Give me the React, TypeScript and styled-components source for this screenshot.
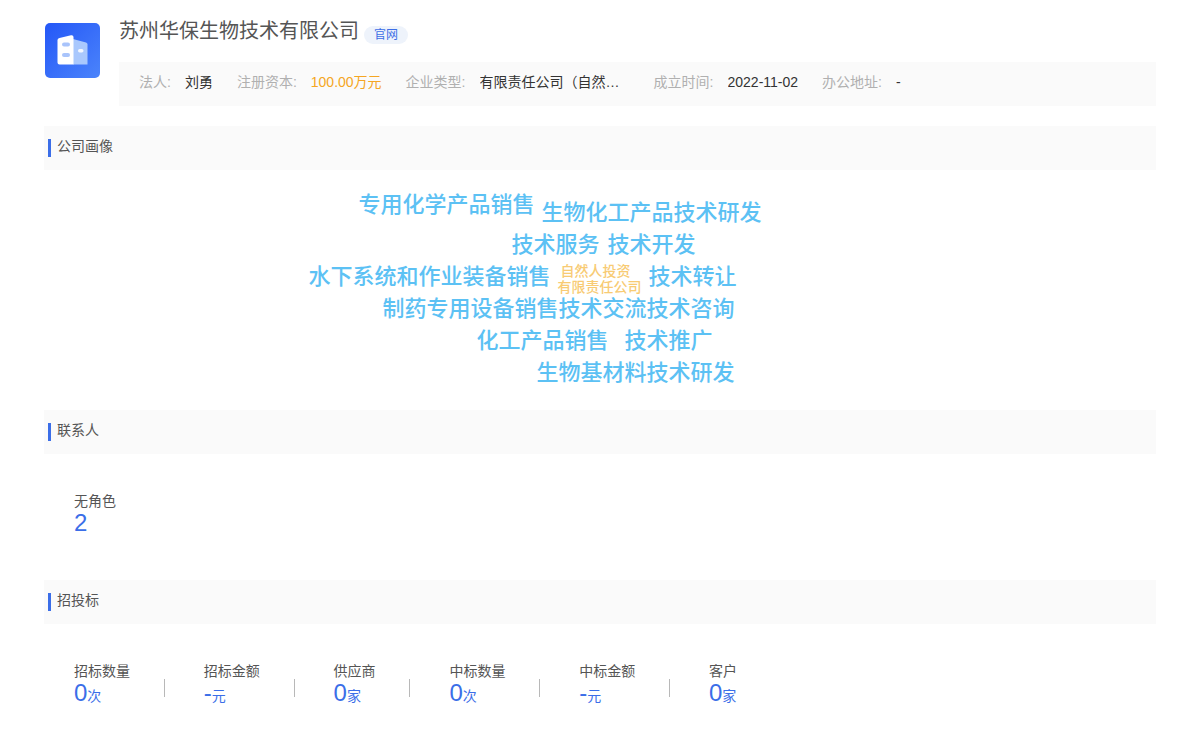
import * as React from "react";
import styled, { createGlobalStyle } from "styled-components";

const GlobalStyle = createGlobalStyle`
  html, body {
    margin: 0;
    padding: 0;
    background: #fff;
  }
  body {
    font-family: "Liberation Sans", "Noto Sans CJK SC", sans-serif;
    color: #333;
  }
`;

const Page = styled.div`
  width: 1200px;
  height: 752px;
  box-sizing: border-box;
  padding: 18px 44px 0;
  overflow: hidden;
`;

// ----------------------------------------------------------------------
// Company header
// ----------------------------------------------------------------------

const CompanyHeader = styled.header`
  display: flex;
  align-items: flex-start;
  margin-bottom: 20px;
`;

const LogoBox = styled.div`
  width: 55px;
  height: 55px;
  margin: 5px 19px 0 1px;
  flex: none;
`;

const CompanyMain = styled.div`
  flex: 1;
  min-width: 0;
`;

const TitleRow = styled.div`
  display: flex;
  align-items: center;
  height: 26px;
  margin-bottom: 18px;
`;

const CompanyName = styled.h1`
  margin: 0;
  font-size: 20px;
  line-height: 26px;
  font-weight: 400;
  color: #555;
`;

const SiteTag = styled.span`
  margin: 7px 0 0 5px;
  width: 44px;
  height: 18px;
  border-radius: 9px;
  background: #eef3fb;
  color: #3d6ee6;
  font-size: 12px;
  line-height: 18px;
  text-align: center;
`;

const InfoBar = styled.div`
  display: flex;
  align-items: flex-start;
  height: 44px;
  box-sizing: border-box;
  padding: 10px 0 0 20px;
  background: #fafafa;
  font-size: 14px;
  line-height: 20px;
`;

const InfoItem = styled.div<{ $width?: number }>`
  display: flex;
  height: 20px;
  margin-right: 24px;
  white-space: nowrap;
  width: ${({ $width }) => ($width ? `${$width}px` : "auto")};
`;

const InfoLabel = styled.span`
  flex: none;
  color: #b0b0b0;
  margin-right: 14px;
`;

const InfoValue = styled.span<{ $accent?: boolean }>`
  display: block;
  height: 20px;
  color: ${({ $accent }) => ($accent ? "#f5a623" : "#333")};
  overflow: hidden;
  text-overflow: ellipsis;
`;

// ----------------------------------------------------------------------
// Sections
// ----------------------------------------------------------------------

const SectionBar = styled.div`
  display: flex;
  align-items: flex-start;
  height: 44px;
  box-sizing: border-box;
  padding: 13px 0 0 4px;
  background: #fafafa;
`;

const SectionTitle = styled.h2`
  margin: 0;
  padding-left: 6px;
  border-left: 3px solid #3b6ee8;
  height: 18px;
  font-size: 14px;
  line-height: 14px;
  font-weight: 400;
  color: #555;
`;

// the cloud is a free canvas, every word has its own spot
const Cloud = styled.div`
  position: relative;
  height: 240px;
`;

const CloudWord = styled.span<{ $x: number; $y: number; $small?: boolean }>`
  position: absolute;
  left: ${({ $x }) => $x - 44.5}px;
  top: ${({ $y }) => $y - 170 - 15}px;
  line-height: 30px;
  white-space: nowrap;
  font-weight: 500;
  font-size: ${({ $small }) => ($small ? "14px" : "22px")};
  color: ${({ $small }) => ($small ? "#f8cb74" : "#5cc1f4")};
`;

const ContactBody = styled.div`
  height: 126px;
  box-sizing: border-box;
  padding: 40px 0 0 30px;
`;

const TenderBody = styled.div`
  display: flex;
  padding: 40px 0 0 30px;
`;

const Stat = styled.div<{ $divider?: boolean }>`
  padding-right: 33.8px;
  margin-right: 39px;
  border-right: ${({ $divider }) => ($divider ? "1px solid #b8b8b8" : "none")};
  height: 18px;
  margin-top: 15px;
`;

const StatInner = styled.div`
  margin-top: -15px;
`;

const StatLabel = styled.div`
  font-size: 14px;
  line-height: 14px;
  color: #555;
  white-space: nowrap;
`;

const StatValue = styled.div`
  margin-top: 1px;
  font-size: 24px;
  line-height: 28px;
  color: #3b6ee8;
  white-space: nowrap;
`;

const StatUnit = styled.span`
  font-size: 14px;
`;

// ----------------------------------------------------------------------
// Data
// ----------------------------------------------------------------------

const words = [
  { text: "专用化学产品销售", x: 359, y: 205 },
  { text: "生物化工产品技术研发", x: 542, y: 213 },
  { text: "技术服务", x: 512, y: 245 },
  { text: "技术开发", x: 608, y: 245 },
  { text: "水下系统和作业装备销售", x: 309, y: 277 },
  { text: "自然人投资", x: 561, y: 271, small: true },
  { text: "有限责任公司", x: 558, y: 287, small: true },
  { text: "技术转让", x: 649, y: 277 },
  { text: "制药专用设备销售", x: 383, y: 309 },
  { text: "技术交流", x: 559, y: 309 },
  { text: "技术咨询", x: 647, y: 309 },
  { text: "化工产品销售", x: 477, y: 341 },
  { text: "技术推广", x: 625, y: 341 },
  { text: "生物基材料技术研发", x: 537, y: 373 },
];

const stats = [
  { label: "招标数量", value: "0", unit: "次" },
  { label: "招标金额", value: "-", unit: "元" },
  { label: "供应商", value: "0", unit: "家" },
  { label: "中标数量", value: "0", unit: "次" },
  { label: "中标金额", value: "-", unit: "元" },
  { label: "客户", value: "0", unit: "家" },
];

function CompanyLogo() {
  return (
    <LogoBox>
      <svg width="55" height="55" viewBox="0 0 55 55">
        <defs>
          <linearGradient id="logoBg" x1="0" y1="0" x2="1" y2="1">
            <stop offset="0" stopColor="#2457f7" />
            <stop offset="1" stopColor="#4b84fb" />
          </linearGradient>
        </defs>
        <rect width="55" height="55" rx="5" fill="url(#logoBg)" />
        <path d="M28 16 L41 19.5 Q42.5 20 42.5 21.5 V41.5 H28 Z" fill="#a9c8fd" />
        <path
          d="M14.5 15 L26 12.3 Q28.5 12 28.5 14 V41.5 H14.5 Q12.5 41.5 12.5 39.5 V17 Q12.5 15.4 14.5 15 Z"
          fill="#fff"
        />
        <rect x="17" y="19.5" width="8" height="4" rx="2" fill="#a9c4fb" />
        <rect x="17" y="30" width="8" height="4" rx="2" fill="#a9c4fb" />
        <rect x="33" y="26" width="5.5" height="3.5" rx="1.7" fill="#f2f7ff" />
      </svg>
    </LogoBox>
  );
}

export default function App() {
  return (
    <Page>
      <GlobalStyle />
      <CompanyHeader>
        <CompanyLogo />
        <CompanyMain>
          <TitleRow>
            <CompanyName>苏州华保生物技术有限公司</CompanyName>
            <SiteTag>官网</SiteTag>
          </TitleRow>
          <InfoBar>
            <InfoItem>
              <InfoLabel>法人:</InfoLabel>
              <InfoValue>刘勇</InfoValue>
            </InfoItem>
            <InfoItem>
              <InfoLabel>注册资本:</InfoLabel>
              <InfoValue $accent>100.00万元</InfoValue>
            </InfoItem>
            <InfoItem $width={224}>
              <InfoLabel>企业类型:</InfoLabel>
              <InfoValue>有限责任公司（自然人投资或控股）</InfoValue>
            </InfoItem>
            <InfoItem>
              <InfoLabel>成立时间:</InfoLabel>
              <InfoValue>2022-11-02</InfoValue>
            </InfoItem>
            <InfoItem>
              <InfoLabel>办公地址:</InfoLabel>
              <InfoValue>-</InfoValue>
            </InfoItem>
          </InfoBar>
        </CompanyMain>
      </CompanyHeader>

      <SectionBar>
        <SectionTitle>公司画像</SectionTitle>
      </SectionBar>
      <Cloud>
        {words.map((w) => (
          <CloudWord key={w.text} $x={w.x} $y={w.y} $small={w.small}>
            {w.text}
          </CloudWord>
        ))}
      </Cloud>

      <SectionBar>
        <SectionTitle>联系人</SectionTitle>
      </SectionBar>
      <ContactBody>
        <StatLabel>无角色</StatLabel>
        <StatValue>2</StatValue>
      </ContactBody>

      <SectionBar>
        <SectionTitle>招投标</SectionTitle>
      </SectionBar>
      <TenderBody>
        {stats.map((s, i) => (
          <Stat key={s.label} $divider={i < stats.length - 1}>
            <StatInner>
              <StatLabel>{s.label}</StatLabel>
              <StatValue>
                {s.value}
                <StatUnit>{s.unit}</StatUnit>
              </StatValue>
            </StatInner>
          </Stat>
        ))}
      </TenderBody>
    </Page>
  );
}
